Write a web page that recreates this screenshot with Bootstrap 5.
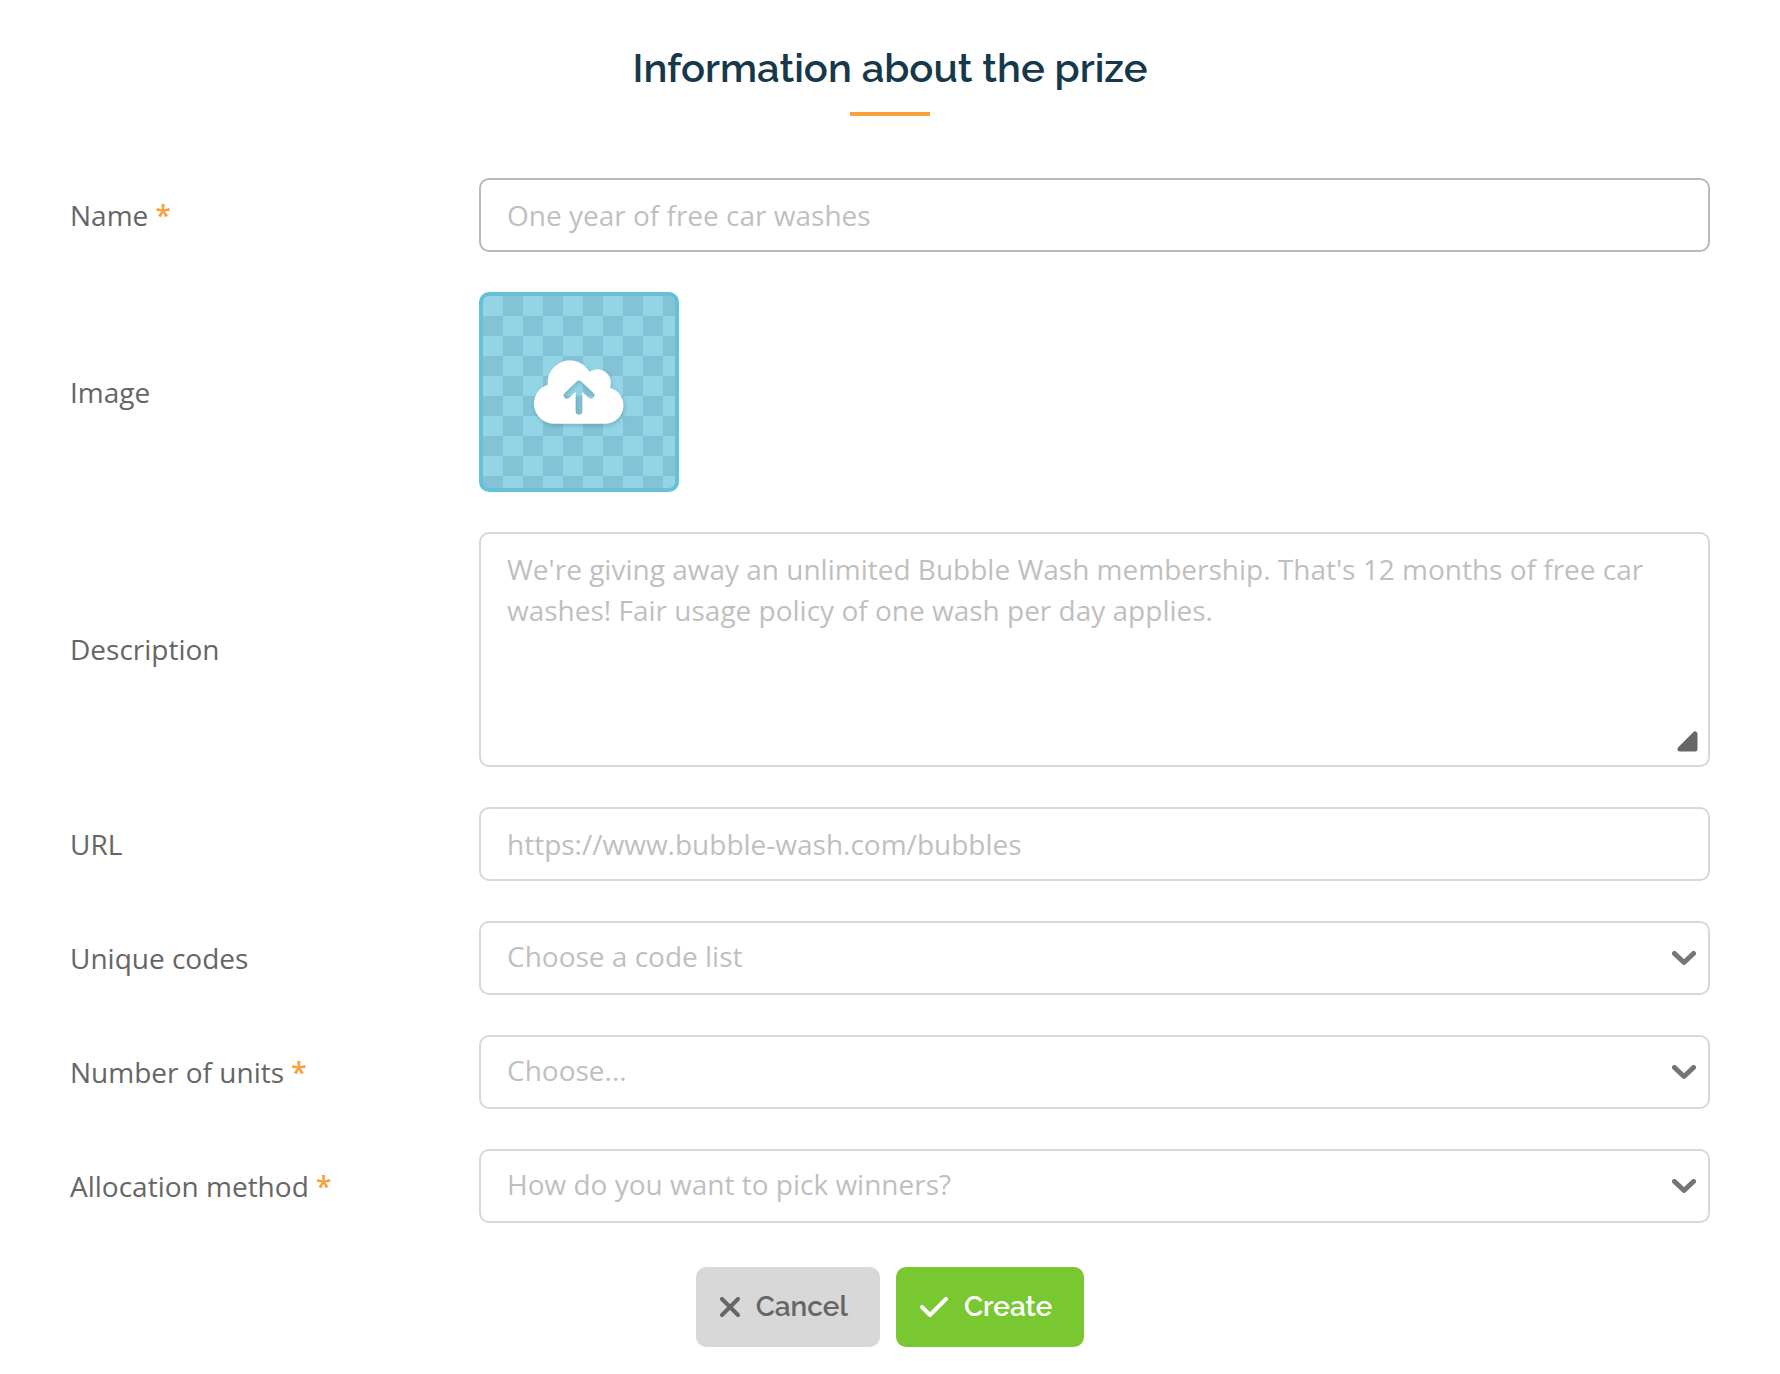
<!DOCTYPE html>
<html lang="en">
<head>
<meta charset="utf-8">
<meta name="viewport" content="width=device-width, initial-scale=1">
<title>Information about the prize</title>
<link href="https://cdn.jsdelivr.net/npm/bootstrap@5.3.0/dist/css/bootstrap.min.css" rel="stylesheet">
<style>
  body { font-family: "Open Sans", "Noto Sans", sans-serif; font-size: 28px; line-height: 41px; color: #666; background: #fff; }
  .prize-form { padding: 43px 70px 27px; }
  .prize-title { font-family: Raleway, Lato, sans-serif; font-size: 40px; line-height: 50px; font-weight: 600; color: #15384b; }
  .title-rule { width: 80px; height: 4px; background: #f9a03a; margin: 19px auto 62px; }
  .field-row { margin-bottom: 40px; }
  .label-col { flex: 0 0 409px; }
  .required-mark { color: #f9a03a; font-weight: 600; }
  .form-control, .form-select { font-size: 28px; line-height: 41px; border: 2px solid #d8d8d8; border-radius: 10px; padding: 15px 26px 14px; min-height: 74px; background-color: #fff; color: #666; }
  .form-control::placeholder { color: #bfbfbf; opacity: 1; }
  .form-control.is-hovered { border-color: #b9b9b9; }
  textarea.form-control { height: 235px; resize: none; display: block; }
  .form-select { color: #bfbfbf; padding: 13px 60px 16px 26px; background-position: right 12px center; background-size: 24px 15px;
    background-image: url("data:image/svg+xml,%3Csvg xmlns='http://www.w3.org/2000/svg' viewBox='0 0 24 15'%3E%3Cpath d='M2.5 2.5L12 11.5L21.5 2.5' fill='none' stroke='%23757575' stroke-width='5' stroke-linecap='round' stroke-linejoin='round'/%3E%3C/svg%3E"); }
  .resize-grip { right: 12px; bottom: 15px; }
  .upload-tile { width: 200px; height: 200px; border: 4px solid #65c0d9; border-radius: 10px; cursor: pointer;
    background: conic-gradient(#84c3d6 25%, #94d5e5 0 50%, #84c3d6 0 75%, #94d5e5 0) 0 0 / 40px 40px; }
  .upload-tile svg { filter: drop-shadow(1px 2px 2px rgba(0, 60, 80, .22)); }
  .form-actions { gap: 16px; padding-top: 4px; }
  .form-actions .btn { font-family: Raleway, Lato, sans-serif; font-size: 28px; line-height: 40px; font-weight: 600; border: 0; border-radius: 10px; padding: 20px 32px 20px 24px; gap: 16px; }
  .btn-cancel, .btn-cancel:hover { background: #d8d8d8; color: #666; }
  .btn-create, .btn-create:hover { background: #79c832; color: #fff; }
</style>
<script src="https://cdn.jsdelivr.net/npm/bootstrap@5.3.0/dist/js/bootstrap.bundle.min.js"></script>
</head>
<body>
<main class="container-fluid prize-form">
  <h1 class="prize-title text-center mb-0">Information about the prize</h1>
  <div class="title-rule"></div>
  <form>
    <div class="row gx-0 align-items-center field-row">
      <label class="label-col" for="prizeName">Name <span class="required-mark">*</span></label>
      <div class="col"><input class="form-control is-hovered" id="prizeName" type="text" placeholder="One year of free car washes"></div>
    </div>
    <div class="row gx-0 align-items-center field-row">
      <label class="label-col" for="prizeImage">Image</label>
      <div class="col d-flex">
        <input class="visually-hidden" id="prizeImage" type="file" accept="image/*">
        <label class="upload-tile d-flex align-items-center justify-content-center" for="prizeImage" aria-label="Upload image">
          <svg width="90" height="64" viewBox="192 240 270 192" aria-hidden="true">
            <mask id="arrowCut" maskUnits="userSpaceOnUse" x="190" y="238" width="274" height="196">
              <rect x="190" y="238" width="274" height="196" fill="#fff"/>
              <path d="M327 394V313M291 346L327 312L363 346" fill="none" stroke="#000" stroke-width="20" stroke-linecap="round" stroke-linejoin="round"/>
            </mask>
            <path mask="url(#arrowCut)" fill="#fff" d="M252 431A60 60 0 0 1 233 314A67 67 0 0 1 358 275A41 41 0 0 1 420 323A55 55 0 0 1 408 431Z"/>
          </svg>
        </label>
      </div>
    </div>
    <div class="row gx-0 align-items-center field-row">
      <label class="label-col" for="prizeDescription">Description</label>
      <div class="col position-relative">
        <textarea class="form-control" id="prizeDescription" placeholder="We're giving away an unlimited Bubble Wash membership. That's 12 months of free car washes! Fair usage policy of one wash per day applies."></textarea>
        <svg class="resize-grip position-absolute" width="21" height="21" viewBox="0 0 21 21" aria-hidden="true"><path d="M3 18L18 3V18Z" fill="#666" stroke="#666" stroke-width="5" stroke-linejoin="round"/></svg>
      </div>
    </div>
    <div class="row gx-0 align-items-center field-row">
      <label class="label-col" for="prizeUrl">URL</label>
      <div class="col"><input class="form-control" id="prizeUrl" type="url" placeholder="https://www.bubble-wash.com/bubbles"></div>
    </div>
    <div class="row gx-0 align-items-center field-row">
      <label class="label-col" for="codeList">Unique codes</label>
      <div class="col"><select class="form-select" id="codeList"><option>Choose a code list</option></select></div>
    </div>
    <div class="row gx-0 align-items-center field-row">
      <label class="label-col" for="unitCount">Number of units <span class="required-mark">*</span></label>
      <div class="col"><select class="form-select" id="unitCount"><option>Choose...</option></select></div>
    </div>
    <div class="row gx-0 align-items-center field-row">
      <label class="label-col" for="allocation">Allocation method <span class="required-mark">*</span></label>
      <div class="col"><select class="form-select" id="allocation"><option>How do you want to pick winners?</option></select></div>
    </div>
    <div class="form-actions d-flex justify-content-center">
      <button class="btn btn-cancel d-flex align-items-center" type="button">
        <svg width="20" height="20" viewBox="0 0 20 20" aria-hidden="true"><path d="M2 2L18 18M18 2L2 18" stroke="currentColor" stroke-width="4" stroke-linecap="round"/></svg>
        Cancel
      </button>
      <button class="btn btn-create d-flex align-items-center" type="submit">
        <svg width="28" height="20" viewBox="0 0 28 20" aria-hidden="true"><path d="M2 10L10 18L26 2" fill="none" stroke="currentColor" stroke-width="4" stroke-linecap="round" stroke-linejoin="round"/></svg>
        Create
      </button>
    </div>
  </form>
</main>
</body>
</html>
